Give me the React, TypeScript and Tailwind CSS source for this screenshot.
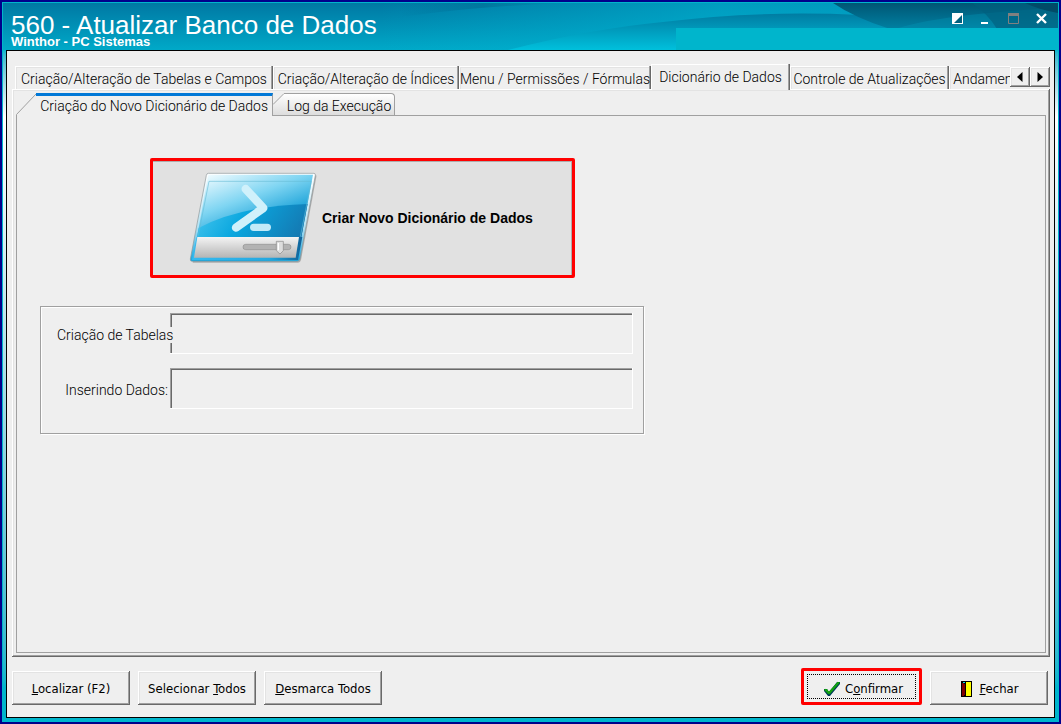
import React from 'react';
import clsx from 'clsx';

const raised =
  'bg-[#efefef] shadow-[inset_-1px_-1px_#696969,inset_1px_1px_#ffffff,inset_-2px_-2px_#a0a0a0,inset_2px_2px_#e3e3e3]';

const tabs = [
  { label: 'Criação/Alteração de Tabelas e Campos', width: 'w-[258px]' },
  { label: 'Criação/Alteração de Índices', width: 'w-[186px]' },
  { label: 'Menu / Permissões / Fórmulas', width: 'w-[192px]' },
  { label: 'Dicionário de Dados', width: 'w-[139px]', active: true },
  { label: 'Controle de Atualizações', width: 'w-[159px]' },
  { label: 'Andamento', width: 'w-[80px]' },
];

function HeaderArt() {
  return (
    <svg className="absolute inset-0 h-full w-full" viewBox="3 3 1055 47" preserveAspectRatio="none" aria-hidden="true">
      <defs>
        <linearGradient id="sky" x1="0" y1="0" x2="0" y2="1">
          <stop offset="0" stopColor="#0078a3" />
          <stop offset="1" stopColor="#00a9c8" />
        </linearGradient>
        <linearGradient id="glow" x1="0" y1="0" x2="1" y2="0">
          <stop offset="0" stopColor="#00b4d2" stopOpacity="0" />
          <stop offset="0.5" stopColor="#00b4d2" stopOpacity="0.6" />
          <stop offset="1" stopColor="#00a0c4" stopOpacity="0.7" />
        </linearGradient>
        <linearGradient id="shade" x1="0" y1="0" x2="1" y2="0">
          <stop offset="0" stopColor="#006d94" stopOpacity="0" />
          <stop offset="0.5" stopColor="#006d94" stopOpacity="0.6" />
          <stop offset="1" stopColor="#0088ac" stopOpacity="0.3" />
        </linearGradient>
        <linearGradient id="hill" x1="0" y1="0" x2="0" y2="1">
          <stop offset="0" stopColor="#007ca2" />
          <stop offset="1" stopColor="#00c0dc" />
        </linearGradient>
        <linearGradient id="deep" x1="0" y1="0" x2="0" y2="1">
          <stop offset="0" stopColor="#005674" />
          <stop offset="1" stopColor="#0080a2" />
        </linearGradient>
      </defs>
      <path d="M3 3H1058V50H3Z" fill="url(#sky)" />
      <path d="M380 50V3H1058V50Z" fill="url(#glow)" />
      <path d="M400 17Q480 6 567 3H400Z" fill="url(#shade)" />
      <path d="M508 50Q590 29 663 22Q760 10 860 15L1058 24V50Z" fill="url(#hill)" />
      <path d="M833 3Q855 18 890 29H1058V3Z" fill="url(#deep)" />
      <path d="M895 29Q940 14 1058 8V29Z" fill="#0098b6" fillOpacity="0.35" />
      <path d="M972 3Q988 14 997 29H1058V3Z" fill="#00607e" fillOpacity="0.65" />
      <path d="M1025 3Q1040 10 1058 13V3Z" fill="#004b68" />
      <path d="M676 28H1058V50H676Z" fill="#00b5cc" />
    </svg>
  );
}

function ScriptIcon() {
  return (
    <svg className="h-[92px] w-[130px] shrink-0" viewBox="144 66 390 276" aria-hidden="true">
      <defs>
        <linearGradient id="screen" x1="0.1" y1="0" x2="0.8" y2="1">
          <stop offset="0" stopColor="#effbff" />
          <stop offset="0.4" stopColor="#7fd5f2" />
          <stop offset="0.7" stopColor="#28a9dc" />
          <stop offset="1" stopColor="#1277ae" />
        </linearGradient>
        <linearGradient id="wave" x1="0" y1="0.4" x2="1" y2="0.6">
          <stop offset="0" stopColor="#3fc2ec" />
          <stop offset="0.4" stopColor="#0aa7df" />
          <stop offset="1" stopColor="#1479b2" />
        </linearGradient>
        <linearGradient id="rim" x1="0" y1="0" x2="0" y2="1">
          <stop offset="0" stopColor="#ffffff" />
          <stop offset="0.6" stopColor="#b5e2f3" />
          <stop offset="1" stopColor="#16a6df" />
        </linearGradient>
        <linearGradient id="tray" x1="0" y1="0" x2="0" y2="1">
          <stop offset="0" stopColor="#f4f4f4" />
          <stop offset="1" stopColor="#b5b5b5" />
        </linearGradient>
        <linearGradient id="edge" x1="0" y1="0" x2="1" y2="0">
          <stop offset="0" stopColor="#35baf0" />
          <stop offset="0.7" stopColor="#24a8e0" />
          <stop offset="1" stopColor="#0f6299" />
        </linearGradient>
      </defs>
      <path d="M208 74H526Q530 74 529 80L483 330Q481 338 474 338H158Z" fill="#777777" fillOpacity="0.5" />
      <path d="M205 70H522Q527 70 526 76L480 327Q478 334 471 334H156Q150 334 151 327L199 76Q200 70 205 70Z" fill="url(#rim)" stroke="#8d9699" strokeWidth="2" />
      <path d="M205 74H519L484 261H171Z" fill="url(#screen)" />
      <path d="M176 234Q300 168 503 162L484 261H171Z" fill="url(#wave)" />
      <path d="M207 94H514L481 260M207 94L174 260" fill="none" stroke="#66bad5" strokeOpacity="0.6" strokeWidth="3" />
      <path d="M170 261H487L474 330H156Z" fill="url(#edge)" />
      <path d="M172 261H477L467 323H162Z" fill="url(#tray)" />
      <path d="M317 117L370 174L288 233" fill="none" stroke="#d0f1fb" strokeWidth="25" strokeLinecap="round" strokeLinejoin="round" />
      <path d="M341 232H382" stroke="#c1eaf8" strokeWidth="22" strokeLinecap="round" />
      <rect x="309" y="283" width="144" height="16" rx="8" fill="#b3b3b3" stroke="#929292" strokeWidth="2" />
      <path d="M409 274H430V302L420 312L409 302Z" fill="#dddddd" stroke="#888888" strokeWidth="2" />
      <path d="M415 279V301" stroke="#ffffff" strokeWidth="4" />
    </svg>
  );
}

function CheckIcon() {
  return (
    <svg className="h-4 w-4 shrink-0" viewBox="0 0 16 16" aria-hidden="true">
      <path d="M0 8H3L5 11L13 1H16V3L6 15H4L0 10Z" fill="#003c5a" />
      <path d="M0 8H3L5 11L14 1H16L6 13H4Z" fill="#009a0a" />
      <path d="M1 8.500L5 12L14.500 1.500" fill="none" stroke="#12a012" strokeWidth="2" />
    </svg>
  );
}

function DoorIcon() {
  return (
    <svg className="h-4 w-[11px] shrink-0" viewBox="0 0 11 16" shapeRendering="crispEdges" aria-hidden="true">
      <path d="M0 0H11V16H0Z" fill="#000000" />
      <path d="M5 1H10V15H5Z" fill="#ffff00" />
      <path d="M1 2H2L4 4V14L1 15Z" fill="#800000" />
      <path d="M2 1H4V2H2Z" fill="#00e8f0" />
      <path d="M4 4H5V13H4Z" fill="#000000" />
    </svg>
  );
}

function WindowControls() {
  return (
    <div className="absolute top-[10px] right-[11px] flex gap-[17px]">
      <button type="button" aria-label="Alternar" className="h-3 w-[11px]">
        <svg className="h-3 w-[11px]" viewBox="0 0 11 12">
          <path d="M0 0H11V11H0Z" fill="white" />
          <path d="M10 2V10H2Z" fill="#00607e" />
        </svg>
      </button>
      <button type="button" aria-label="Minimizar" className="h-3 w-[11px]">
        <svg className="h-3 w-[11px]" viewBox="0 0 11 12">
          <path d="M1 9H8V11H1Z" fill="white" />
        </svg>
      </button>
      <button type="button" aria-label="Maximizar" disabled className="h-3 w-[11px]">
        <svg className="h-3 w-[11px]" viewBox="0 0 11 12">
          <path d="M.5 1V10.500H10.500V1" fill="none" stroke="#808080" />
          <path d="M0 0H11V3H0Z" fill="#808080" />
        </svg>
      </button>
      <button type="button" aria-label="Fechar janela" className="h-3 w-[11px]">
        <svg className="h-3 w-[11px]" viewBox="0 0 11 12">
          <path d="M1 1L10 10M10 1L1 10" stroke="white" strokeWidth="2.400" />
        </svg>
      </button>
    </div>
  );
}

function MainTabs() {
  const arrow = clsx('flex h-5 w-5 items-center justify-center', raised);

  return (
    <div className="relative z-10 -mb-px flex h-[26px] items-end pl-[3px]">
      <div role="tablist" className="flex min-w-0 flex-1 items-end overflow-hidden">
        {tabs.map((tab) => (
          <button
            key={tab.label}
            type="button"
            role="tab"
            aria-selected={!!tab.active}
            className={clsx(
              'flex shrink-0 justify-center whitespace-nowrap bg-[#efefef] pt-[3px]',
              tab.width,
              tab.active
                ? 'h-[26px] shadow-[inset_-1px_0_#696969,inset_-2px_0_#a0a0a0,inset_1px_1px_#ffffff]'
                : 'h-6 shadow-[inset_0_-1px_#ffffff,inset_-1px_0_#696969,inset_-2px_0_#a0a0a0,inset_1px_1px_#ffffff,inset_2px_2px_#e3e3e3]'
            )}
          >
            {tab.label}
          </button>
        ))}
      </div>
      <div className="flex self-start pt-[3px]">
        <button type="button" aria-label="Guias anteriores" className={arrow}>
          <svg className="h-2.5 w-1.5" viewBox="0 0 6 10">
            <path d="M5.500 0V10L0 5Z" />
          </svg>
        </button>
        <button type="button" aria-label="Próximas guias" className={arrow}>
          <svg className="h-2.5 w-1.5" viewBox="0 0 6 10">
            <path d="M.5 0V10L6 5Z" />
          </svg>
        </button>
      </div>
    </div>
  );
}

function SubTabs() {
  return (
    <div role="tablist" className="relative z-10 -mb-px flex h-[23px] items-stretch">
      <button type="button" role="tab" aria-selected="true" className="flex items-stretch bg-[#efefef]">
        <svg className="h-[23px] w-5" viewBox="0 0 20 23" aria-hidden="true">
          <path d="M.5 23V21.500L20 1" fill="none" stroke="#a0a0a0" />
        </svg>
        <span className="flex w-[237px] justify-end whitespace-nowrap border-t-[3px] border-r border-t-[#0078d7] border-r-[#a0a0a0] pr-1">
          Criação do Novo Dicionário de Dados
        </span>
      </button>
      <button type="button" role="tab" aria-selected="false" className="flex h-[23px] items-stretch border-b border-[#a0a0a0]">
        <svg className="h-[22px] w-[11px]" viewBox="0 0 11 22" aria-hidden="true">
          <defs>
            <linearGradient id="tabFill" x1="0" y1="0" x2="0" y2="1">
              <stop offset="0" stopColor="#ffffff" />
              <stop offset="1" stopColor="#dddddd" />
            </linearGradient>
          </defs>
          <path d="M0 22V11L11 0V22Z" fill="url(#tabFill)" />
          <path d="M0 11.500L11 .5" stroke="#a0a0a0" />
        </svg>
        <span className="flex w-[111px] justify-center whitespace-nowrap rounded-tr border-t border-r border-[#a0a0a0] bg-gradient-to-b from-white to-[#dddddd] pt-[2px]">
          Log da Execução
        </span>
      </button>
    </div>
  );
}

function ProgressPanel() {
  const field =
    'h-[41px] min-w-0 flex-1 bg-[#efefef] shadow-[inset_-1px_-1px_#ffffff,inset_1px_1px_#a0a0a0,inset_2px_2px_#696969] outline-none';

  return (
    <div className="mt-7 ml-[23px] flex w-[604px] max-w-full flex-col gap-[14px] border border-[#a0a0a0] pt-[6px] pr-[10px] pb-6 pl-4 shadow-[1px_1px_#ffffff,inset_1px_1px_#ffffff]">
      <div className="flex items-center">
        <label htmlFor="tabelas" className="relative z-10 w-[113px] whitespace-nowrap pt-[2px]">
          <span className="bg-[#efefef]">Criação de Tabelas</span>
        </label>
        <input id="tabelas" readOnly className={field} />
      </div>
      <div className="flex items-center">
        <label htmlFor="dados" className="w-[113px] whitespace-nowrap pt-[2px] pr-[2px] text-right">
          Inserindo Dados:
        </label>
        <input id="dados" readOnly className={field} />
      </div>
    </div>
  );
}

function Footer() {
  const button = clsx('flex h-[34px] items-center justify-center whitespace-nowrap pt-[2px]', raised);

  return (
    <div className="mt-[11px] flex items-end gap-2 pr-[2px] font-['DejaVu_Sans_Condensed',sans-serif] text-[13px] font-normal">
      <button type="button" className={clsx(button, 'w-[118px]')}>
        <span><u>L</u>ocalizar (F2)</span>
      </button>
      <button type="button" className={clsx(button, 'w-[118px]')}>
        <span>Selecionar <u>T</u>odos</span>
      </button>
      <button type="button" className={clsx(button, 'w-[118px]')}>
        <span><u>D</u>esmarca Todos</span>
      </button>
      <button type="button" className="ml-auto h-[37px] w-[121px] rounded-xs border-[3px] border-[#ff0000] p-[3px]">
        <span className="flex h-full items-center justify-center gap-[5px] border border-dotted border-black pt-1 pl-1">
          <CheckIcon />
          <span>C<u>o</u>nfirmar</span>
        </span>
      </button>
      <button type="button" className={clsx(button, 'w-[118px] gap-[7px] pl-[2px]')}>
        <DoorIcon />
        <span><u>F</u>echar</span>
      </button>
    </div>
  );
}

export default function App() {
  return (
    <div className="flex min-h-screen flex-col border-2 border-[#00008b] bg-[#00b5cc] p-px font-[Roboto,sans-serif] text-[14px] leading-5 font-light text-black">
      <header className="relative h-[47px] shrink-0 overflow-hidden pl-2 font-['Liberation_Sans',sans-serif] text-white">
        <HeaderArt />
        <div className="relative pt-[9px]">
          <h1 className="text-[26px] leading-[26px] font-normal">560 - Atualizar Banco de Dados</h1>
          <p className="-mt-[2px] text-[13px] leading-3 font-bold">Winthor - PC Sistemas</p>
        </div>
        <WindowControls />
      </header>

      <div className="flex flex-1 flex-col bg-gradient-to-b from-[#00b5cc] from-0% via-white via-10% to-[#00b5cc] to-95% px-[3px] pb-[3px]">
        <main className="flex flex-1 flex-col border border-black bg-[#efefef] pt-[13px] pr-1 pb-3 pl-[5px]">
          <MainTabs />
          <div className={clsx('flex flex-1 flex-col p-1', raised)}>
            <SubTabs />
            <div className="flex-1 border border-[#a0a0a0] pb-4">
              <button
                type="button"
                className="mt-[42px] ml-[133px] flex h-[120px] w-[425px] max-w-full items-center gap-1 rounded-xs border-[3px] border-[#ff0000] bg-[#e1e1e1] pl-[35px] font-['Liberation_Sans',sans-serif] text-[14px] font-bold shadow-[inset_-1px_1px_#adadad]"
              >
                <ScriptIcon />
                <span>Criar Novo Dicionário de Dados</span>
              </button>
              <ProgressPanel />
            </div>
          </div>
          <Footer />
        </main>
      </div>
    </div>
  );
}
